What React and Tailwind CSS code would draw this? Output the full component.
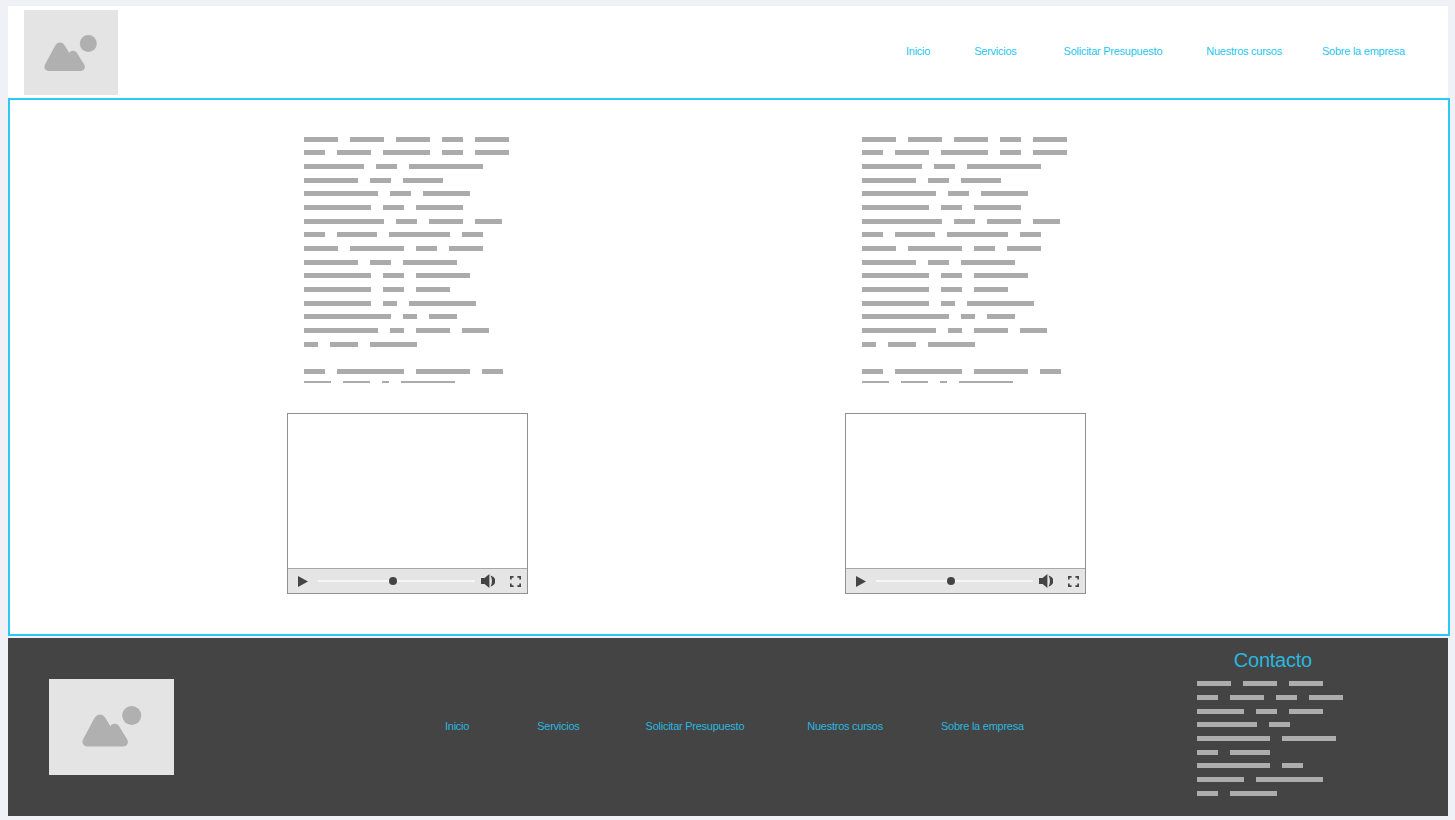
const navTop = [
  ["Inicio", "ml-0"],
  ["Servicios", "ml-[44px]"],
  ["Solicitar Presupuesto", "ml-[47px]"],
  ["Nuestros cursos", "ml-[44px]"],
  ["Sobre la empresa", "ml-[40px]"],
];
const navBottom = [
  ["Inicio", "ml-0"],
  ["Servicios", "ml-[68px]"],
  ["Solicitar Presupuesto", "ml-[66px]"],
  ["Nuestros cursos", "ml-[63px]"],
  ["Sobre la empresa", "ml-[58px]"],
];
const article = [
  [34, 34, 34, 21, 34],
  [21, 34, 47, 21, 34],
  [60, 21, 74],
  [53.5, 21, 40],
  [74, 21, 47],
  [67, 21, 47],
  [80, 21, 34, 27],
  [21, 40, 61, 21],
  [34, 54, 21, 34],
  [53.5, 21, 54],
  [67, 21, 54],
  [67, 21, 34],
  [67, 14, 67],
  [87, 14, 28],
  [74, 14, 34, 27],
  [14, 28, 47],
];
const contact = [
  [34, 34, 34],
  [21, 34, 21, 34],
  [47, 21, 34],
  [60, 21],
  [73, 54],
  [21, 40],
  [73, 21],
  [47, 67],
  [21, 47],
];

function Line({ words, tone = "bg-[#ababab]", className = "" }) {
  return (
    <div className={"flex h-[13.67px] shrink-0 items-center gap-3 " + className}>
      {words.map((w, i) => (
        <span key={i} className={"block h-[5px] " + tone} style={{ width: w }} />
      ))}
    </div>
  );
}

function Placeholder({ className, iconClass }) {
  return (
    <div className={"flex shrink-0 bg-[#e4e4e4] " + className}>
      <svg viewBox="0 0 53 36.5" className={"overflow-visible " + iconClass} fill="#b0b0b0">
        <circle cx="44.3" cy="8.5" r="8.5" />
        <path d="M4.8 36C1.2 36 -0.6 32.6 1 29.6L11 11C13.4 6.4 18.6 6.4 21 11L25.3 18C26.8 15.2 31 15 33 18L40.2 29.6C42 32.6 40.2 36 36.6 36Z" />
      </svg>
    </div>
  );
}

function Video() {
  return (
    <div className="flex h-[181px] w-[241px] flex-col border border-[#909090] bg-white">
      <div className="flex-1" />
      <div className="flex h-[25px] items-center border-t border-[#a8a8a8] bg-[#e5e5e5]">
        <svg viewBox="0 0 10 11" className="ml-[9.5px] h-[11px] w-[10px]" fill="#444">
          <path d="M0 0L10 5.5L0 11Z" />
        </svg>
        <div className="relative ml-[10.5px] h-[2px] w-[157px] bg-[#f6f6f6]">
          <span className="absolute left-[71px] top-[-3px] h-2 w-2 rounded-full bg-[#444]" />
        </div>
        <svg viewBox="0 0 14 14" className="ml-[6px] h-[14px] w-[14px]" fill="#444">
          <path d="M0 4H3.6L8.4 0V14L3.6 10H0Z" />
          <path d="M9.4 1.4C13.2 2.6 14.4 5 14.4 7C14.4 9 13.2 11.4 9.4 12.6C11.4 9.6 11.4 4.4 9.4 1.4Z" />
        </svg>
        <svg viewBox="0 0 11 11" className="ml-[15px] h-[11px] w-[11px]" fill="none" stroke="#444" strokeWidth="1.7">
          <path d="M0.85 3.6V0.85H3.6M7.4 0.85H10.15V3.6M10.15 7.4V10.15H7.4M3.6 10.15H0.85V7.4" />
        </svg>
      </div>
    </div>
  );
}

function Column() {
  return (
    <div className="flex w-[558px] shrink-0 flex-col">
      <div className="ml-[17px] flex h-[250.5px] flex-col overflow-hidden">
        {article.map((words, i) => (
          <Line key={i} words={words} />
        ))}
        <Line words={[21, 67, 53.5, 21]} className="mt-[13.67px]" />
        <Line words={[27, 27, 7, 54]} className="mt-[-1.7px]" />
      </div>
      <div className="mt-[30px]">
        <Video />
      </div>
    </div>
  );
}

export default function App() {
  return (
    <div className="h-[820px] w-[1455px] overflow-hidden bg-[#f0f1f6] pl-2 pt-[6px] font-['Liberation_Sans',Arial,sans-serif]">
      <header className="flex h-[92px] w-[1440px] items-start bg-white">
        <Placeholder className="ml-4 mt-1 h-[85px] w-[93.5px]" iconClass="ml-[20px] mt-[24.5px] h-[36.5px] w-[53px]" />
        <nav className="ml-[788.5px] mt-[38px] flex text-[11px] leading-[14px] tracking-[-0.25px] text-[#1fc6f1]">
          {navTop.map(([t, m]) => (
            <a key={t} className={"whitespace-nowrap " + m}>{t}</a>
          ))}
        </nav>
      </header>
      <main className="h-[538px] w-[1442px] border-2 border-[#2cc9f2] bg-white pl-[277px] pt-[32.5px]">
        <div className="flex">
          <Column />
          <Column />
        </div>
      </main>
      <footer className="mt-[2px] flex h-[178px] w-[1440px] items-start bg-[#444444]">
        <Placeholder className="ml-[41px] mt-[41px] h-[96px] w-[125px]" iconClass="ml-[33px] mt-[27px] h-[41px] w-[59.5px]" />
        <nav className="ml-[271px] mt-[81px] flex text-[11px] leading-[14px] tracking-[-0.25px] text-[#2bb6df]">
          {navBottom.map(([t, m]) => (
            <a key={t} className={"whitespace-nowrap " + m}>{t}</a>
          ))}
        </nav>
        <div className="ml-[173px] flex flex-col">
          <h3 className="ml-[37px] mt-[10px] text-[20px] leading-[24px] font-normal tracking-[-0.25px] text-[#2bb6df]">Contacto</h3>
          <div className="mt-[5px] flex flex-col">
            {contact.map((words, i) => (
              <Line key={i} words={words} tone="bg-[#adadad]" />
            ))}
          </div>
        </div>
      </footer>
    </div>
  );
}
